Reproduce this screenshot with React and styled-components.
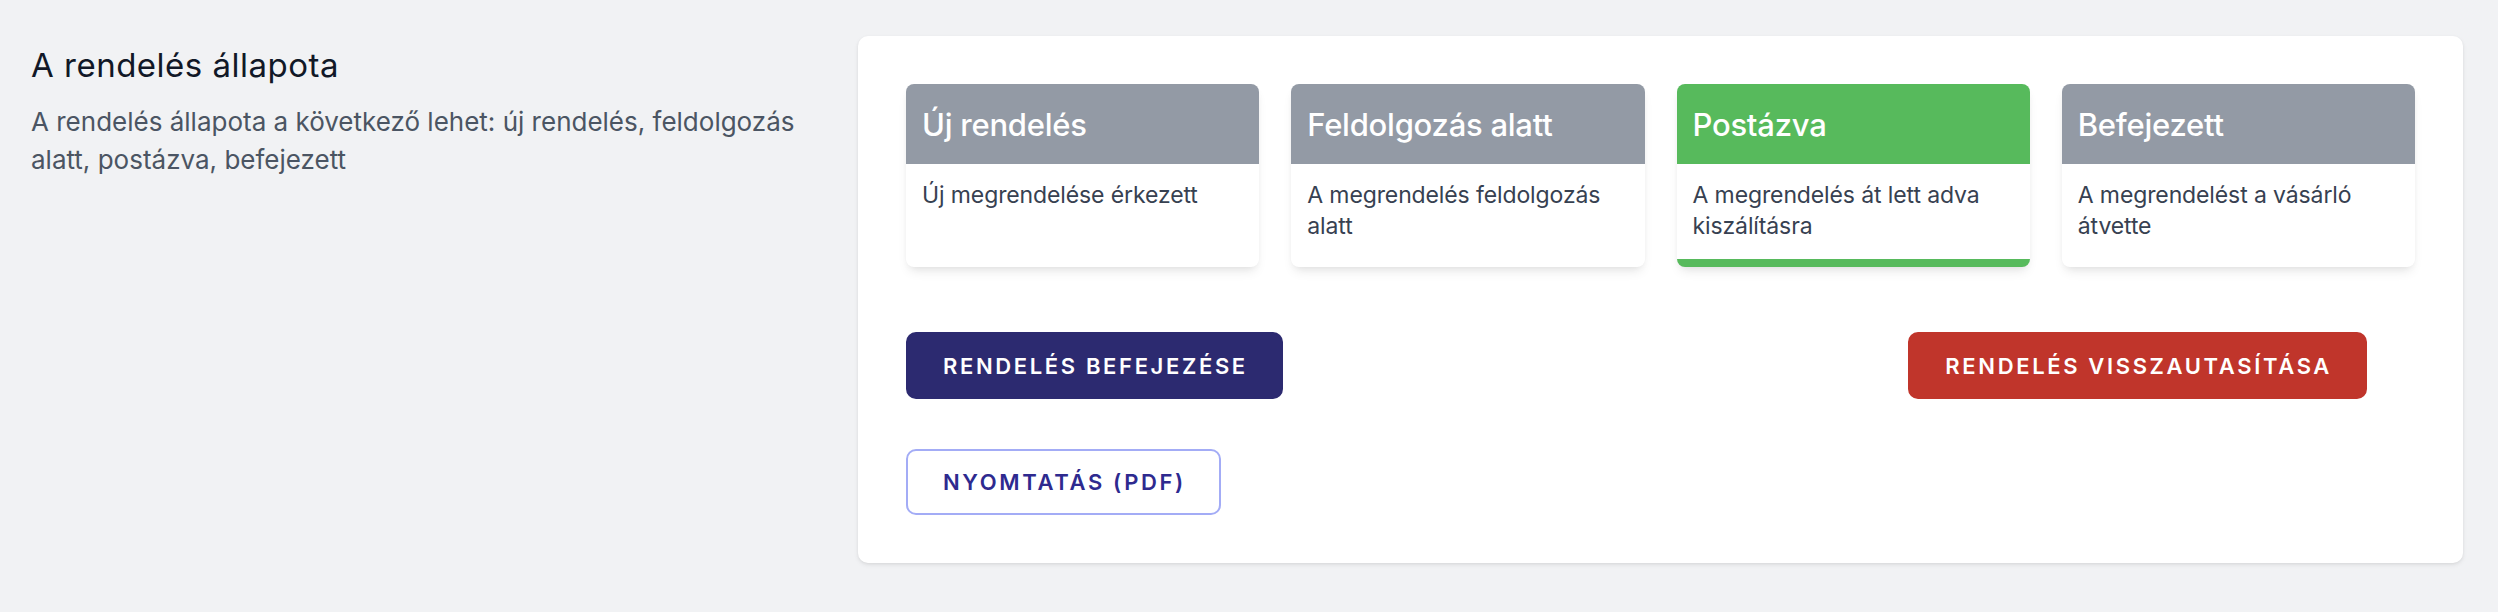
import React from "react";
import styled, { createGlobalStyle } from "styled-components";

const GlobalStyle = createGlobalStyle`
  html, body { margin: 0; padding: 0; }
  body {
    background: #f1f2f4;
    font-family: Inter, "Noto Sans", sans-serif;
    -webkit-font-smoothing: antialiased;
  }
  * { box-sizing: border-box; }
`;

const Page = styled.div`
  display: grid;
  grid-template-columns: 778px 1605px;
  column-gap: 49px;
  align-items: start;
  padding: 36px 35px 49px 31px;
  min-height: 612px;
`;

const Intro = styled.div`
  display: flex;
  flex-direction: column;
  padding-top: 3px;
`;

const Title = styled.h3`
  margin: 0;
  font-size: 33px;
  line-height: 53px;
  font-weight: 400;
  letter-spacing: 0.015em;
  color: #111827;
`;

const Description = styled.p`
  margin: 11px 0 0;
  font-size: 26px;
  line-height: 38px;
  letter-spacing: 0;
  color: #4b5563;
`;

const Panel = styled.section`
  background: #ffffff;
  border-radius: 10px;
  box-shadow: 0 2px 5px rgba(0, 0, 0, 0.07), 0 1px 3px rgba(0, 0, 0, 0.05);
  padding: 48px;
`;

const StatusGrid = styled.div`
  display: grid;
  grid-template-columns: repeat(4, 1fr);
  gap: 32px;
`;

const StatusCard = styled.div`
  display: flex;
  flex-direction: column;
  background: #ffffff;
  border-radius: 8px;
  overflow: hidden;
  border-bottom: 8px solid ${(p) => (p.$active ? "#57ba5c" : "#ffffff")};
  box-shadow: 0 7px 12px -3px rgba(0, 0, 0, 0.09), 0 3px 7px -3px rgba(0, 0, 0, 0.08);
`;

const StatusHeader = styled.div`
  display: flex;
  align-items: center;
  height: 80px;
  padding: 0 16px;
  background: ${(p) => (p.$active ? "#57ba5c" : "#939aa5")};
  color: #ffffff;
  font-size: 31px;
  font-weight: 500;
  letter-spacing: -0.008em;
`;

const StatusBody = styled.div`
  flex: 1;
  padding: 16px 16px 17px;
  font-size: 23px;
  line-height: 31px;
  letter-spacing: -0.005em;
  color: #374151;
`;

const ActionRow = styled.div`
  display: flex;
  justify-content: space-between;
  align-items: center;
  margin-top: 65px;
  padding-right: 48px;
`;

const PrintRow = styled.div`
  display: flex;
  margin-top: 50px;
`;

const variants = {
  primary: { bg: "#2c2a70", color: "#ffffff", border: "#2c2a70" },
  danger: { bg: "#c0352b", color: "#ffffff", border: "#c0352b" },
  outline: { bg: "#ffffff", color: "#2e2a8f", border: "#a3acf6" },
};

const Button = styled.button`
  display: inline-flex;
  align-items: center;
  justify-content: center;
  height: ${(p) => (p.$variant === "outline" ? "66px" : "67px")};
  padding: 0 33px 0 35px;
  border-radius: 10px;
  border: 2px solid ${(p) => variants[p.$variant].border};
  background: ${(p) => variants[p.$variant].bg};
  color: ${(p) => variants[p.$variant].color};
  font-family: Inter, "Noto Sans", sans-serif;
  font-size: 22px;
  font-weight: 600;
  letter-spacing: 0.12em;
  text-transform: uppercase;
  cursor: pointer;
`;

const statuses = [
  { name: "Új rendelés", desc: "Új megrendelése érkezett" },
  { name: "Feldolgozás alatt", desc: "A megrendelés feldolgozás alatt" },
  { name: "Postázva", desc: "A megrendelés át lett adva kiszálításra", active: true },
  { name: "Befejezett", desc: "A megrendelést a vásárló átvette" },
];

export default function App() {
  return (
    <>
      <GlobalStyle />
      <Page>
        <Intro>
          <Title>A rendelés állapota</Title>
          <Description>
            A rendelés állapota a következő lehet: új rendelés, feldolgozás alatt, postázva, befejezett
          </Description>
        </Intro>
        <Panel>
          <StatusGrid>
            {statuses.map((s) => (
              <StatusCard key={s.name} $active={s.active}>
                <StatusHeader $active={s.active}>{s.name}</StatusHeader>
                <StatusBody>{s.desc}</StatusBody>
              </StatusCard>
            ))}
          </StatusGrid>
          <ActionRow>
            <Button $variant="primary">Rendelés befejezése</Button>
            <Button $variant="danger">Rendelés visszautasítása</Button>
          </ActionRow>
          <PrintRow>
            <Button $variant="outline">Nyomtatás (PDF)</Button>
          </PrintRow>
        </Panel>
      </Page>
    </>
  );
}
